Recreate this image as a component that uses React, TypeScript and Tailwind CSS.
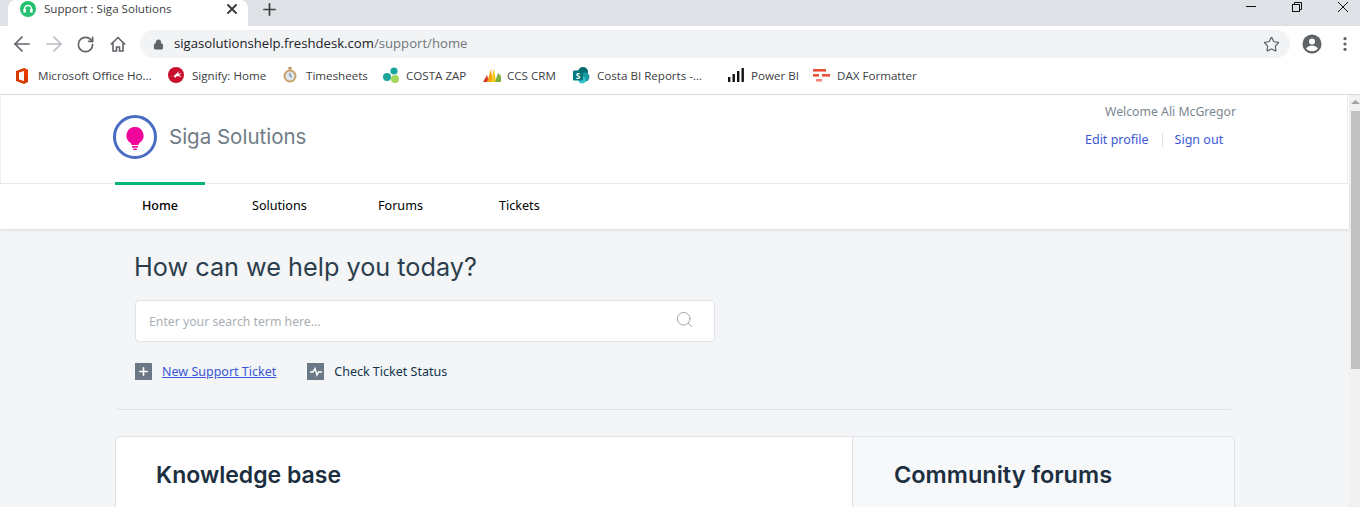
import { ArrowLeft, ArrowRight, RotateCw, Lock, Star, Plus, X, Search } from 'lucide-react'

const UI_FONT = "font-['Open_Sans','Noto_Sans',sans-serif]"
const HEADING_FONT = "font-['Inter',sans-serif]"

function OfficeIcon() {
  return (
    <svg width="14" height="18" viewBox="0 0 14 18">
      <path d="M1 4 9 1l4 2v12l-4 2-8-3z" fill="#d83b01" />
      <path d="M4 5.500 9 4v10l-5-1.500z" fill="#fff" />
      <path d="M9 1l4 2v6H9z" fill="#eb3c00" />
    </svg>
  )
}

function SignifyIcon() {
  return (
    <svg width="16" height="16" viewBox="0 0 16 16" className="-ml-px">
      <circle cx="8" cy="8" r="8" fill="#c8102e" />
      <path d="M1 10c3 0 5-1 7-3l3-3-1 3 4-1-3 2 3 2-5-1-2 2-1-2z" fill="#fff" />
    </svg>
  )
}

function TimerIcon() {
  return (
    <svg width="14" height="16" viewBox="0 0 14 16">
      <rect x="5.500" y="0" width="3" height="2.500" fill="#b98a4e" />
      <circle cx="7" cy="9" r="6.500" fill="#c9a26b" />
      <circle cx="7" cy="9" r="4.500" fill="#dfe7ee" />
      <path d="M7 6v3l2 1" stroke="#5b6b7a" strokeWidth="1" fill="none" />
    </svg>
  )
}

function CostaIcon() {
  return (
    <svg width="18" height="17" viewBox="0 0 18 17" className="-ml-px">
      <circle cx="12" cy="4" r="3.600" fill="#1aa59a" />
      <circle cx="5" cy="10" r="4" fill="#1aa59a" />
      <circle cx="13" cy="12" r="4" fill="#a3d65c" />
    </svg>
  )
}

function CrmIcon() {
  return (
    <svg width="18" height="16" viewBox="0 0 18 16" className="-ml-px">
      <path d="M0 15 4 8l2 7z" fill="#d9382c" />
      <path d="M4 15 8 2l2 13z" fill="#f2a516" />
      <path d="M8 15 11 1l2 14z" fill="#f7c81e" />
      <path d="M12 15l3-9 3 3v6z" fill="#7fb03f" />
    </svg>
  )
}

function SharepointIcon() {
  return (
    <svg width="17" height="17" viewBox="0 0 17 17" className="-ml-px">
      <circle cx="10" cy="5" r="5" fill="#036c70" />
      <circle cx="12" cy="10" r="4.500" fill="#1a9ba1" />
      <circle cx="9" cy="13" r="3.600" fill="#37c6d0" />
      <rect x="0" y="3.500" width="10" height="10" rx="1" fill="#03787c" />
      <text x="5" y="11.500" textAnchor="middle" fontSize="8" fontWeight="700" fill="#fff" fontFamily="Open Sans">S</text>
    </svg>
  )
}

function PowerBiIcon() {
  return (
    <svg width="16" height="14" viewBox="0 0 16 14">
      <rect x="0" y="9" width="2.400" height="5" fill="#111" />
      <rect x="4.500" y="6" width="2.400" height="8" fill="#111" />
      <rect x="9" y="3" width="2.400" height="11" fill="#111" />
      <rect x="13.500" y="0" width="2.400" height="14" fill="#111" />
    </svg>
  )
}

function DaxIcon() {
  return (
    <svg width="17" height="13" viewBox="0 0 17 13" className="-ml-px">
      <rect x="0" y="0" width="13" height="2.600" fill="#e8503a" />
      <rect x="0" y="5" width="6" height="2.600" fill="#e8503a" />
      <rect x="9" y="5" width="8" height="2.600" fill="#e8503a" />
      <rect x="3" y="10" width="6" height="2.600" fill="#f08a78" />
    </svg>
  )
}

const bookmarks = [
  { label: 'Microsoft Office Ho...', icon: <OfficeIcon />, width: 'w-[154px]' },
  { label: 'Signify: Home', icon: <SignifyIcon />, width: 'w-[114px]' },
  { label: 'Timesheets', icon: <TimerIcon />, width: 'w-[100px]' },
  { label: 'COSTA ZAP', icon: <CostaIcon />, width: 'w-[101px]' },
  { label: 'CCS CRM', icon: <CrmIcon />, width: 'w-[90px]' },
  { label: 'Costa BI Reports -...', icon: <SharepointIcon />, width: 'w-[154px]' },
  { label: 'Power BI', icon: <PowerBiIcon />, width: 'w-[86px]' },
  { label: 'DAX Formatter', icon: <DaxIcon />, width: 'w-[120px]' },
]

function BrowserChrome() {
  return (
    <div className={UI_FONT}>
      {/* Tab strip */}
      <div className="flex h-[26px] bg-[#dee1e6]">
        <div className="ml-2 flex h-[26px] w-[240px] items-start rounded-t-lg bg-white pl-3 pr-2 pt-[1px]">
          <span className="flex h-4 w-4 items-center justify-center rounded-full bg-[#25c16f]">
            <svg width="10" height="10" viewBox="0 0 10 10" fill="none" stroke="#fff" strokeWidth="1.300">
              <path d="M1.500 6.500V5a3.500 3.500 0 0 1 7 0v1.500" />
              <rect x="1" y="5.500" width="1.400" height="2.400" fill="#fff" />
              <rect x="7.600" y="5.500" width="1.400" height="2.400" fill="#fff" />
            </svg>
          </span>
          <span className="ml-2 flex-1 text-[11.6px] leading-4 text-[#3c4043]">Support : Siga Solutions</span>
          <X size={16} strokeWidth={3} className="text-[#3c4043]" />
        </div>
        <Plus size={19} strokeWidth={2.2} className="ml-[12px] mt-0 text-[#3c4043]" />
        <div className="ml-auto flex h-[26px] items-start pt-[2px]">
          <div className="mt-[4px] h-px w-[10px] bg-[#111]" />
          <svg width="10" height="10" viewBox="0 0 10 10" fill="none" stroke="#111" className="ml-[36px]">
            <rect x="0.500" y="2.500" width="7" height="7" />
            <path d="M2.500 2.500V.5h7v7H7.500" />
          </svg>
          <svg width="10" height="10" viewBox="0 0 10 10" fill="none" stroke="#111" className="ml-[36px] mr-[12px]">
            <path d="M0 0l10 10M10 0 0 10" />
          </svg>
        </div>
      </div>

      {/* Toolbar */}
      <div className="flex h-[36px] items-center bg-white pl-[10px]">
        <ArrowLeft size={24} strokeWidth={1.7} className="text-[#5f6368]" />
        <ArrowRight size={24} strokeWidth={1.7} className="ml-[8px] text-[#b9bcc0]" />
        <RotateCw size={19} strokeWidth={2.1} className="ml-[10px] text-[#5f6368]" />
        <svg width="16" height="16" viewBox="0 0 16 16" fill="none" stroke="#5f6368" strokeWidth="1.600" className="ml-[15px]">
          <path d="M.8 8.500 8 1.500l7.200 7M3 7v8h3.500v-4h3v4H13V7" />
        </svg>
        <div className="ml-[14px] flex h-[28px] w-[1150px] items-center rounded-full bg-[#f1f3f4] pl-[13px] pr-[10px]">
          <Lock size={11} fill="#5f6368" className="text-[#5f6368]" />
          <span className="ml-[10px] text-[13.15px] text-[#202124]">
            sigasolutionshelp.freshdesk.com<span className="text-[#70757a]">/support/home</span>
          </span>
          <Star size={17} strokeWidth={1.7} className="ml-auto text-[#5f6368]" />
        </div>
        <svg width="20" height="20" viewBox="0 0 20 20" className="ml-[12px]">
          <circle cx="10" cy="10" r="9.500" fill="#5f6368" />
          <circle cx="10" cy="7.500" r="3" fill="#fff" />
          <path d="M4 14.500c1.500-2 3.500-3 6-3s4.500 1 6 3c-1.500 1.800-3.500 2.700-6 2.700s-4.500-.9-6-2.700z" fill="#fff" />
        </svg>
        <svg width="4" height="14" viewBox="0 0 4 14" fill="#5f6368" className="ml-[21px]">
          <circle cx="2" cy="1.700" r="1.600" />
          <circle cx="2" cy="7" r="1.600" />
          <circle cx="2" cy="12.300" r="1.600" />
        </svg>
      </div>

      {/* Bookmarks */}
      <div className="flex h-[33px] items-center border-b border-[#d9dbe0] bg-white pb-[5px] pl-[15px]">
        {bookmarks.map((b) => (
          <div key={b.label} className={`flex items-center ${b.width}`}>
            <span className="flex w-[23px] shrink-0 items-center">{b.icon}</span>
            <span className="whitespace-nowrap text-[11.6px] text-[#3c4043]">{b.label}</span>
          </div>
        ))}
      </div>
    </div>
  )
}

function Portal() {
  return (
    <div className="min-w-0 flex-1 font-['Noto_Sans','Open_Sans',sans-serif]">
      {/* Logo row */}
      <div className="mr-px flex h-[89px] border border-t-0 border-[#ebeff3] bg-white pl-[111px]">
        <div className="flex items-center self-start pt-[19px]">
          <svg width="46" height="46" viewBox="0 0 46 46">
            <circle cx="23" cy="23" r="20.500" fill="#fff" stroke="#4a6cc3" strokeWidth="3" />
            <path d="M23 13a8.500 8.500 0 0 0-5 15.400c1 .8 1.500 1.500 1.600 2.600h6.800c.1-1.100.6-1.800 1.600-2.600A8.500 8.500 0 0 0 23 13z" fill="#f0059b" />
            <rect x="20" y="32" width="6" height="1.600" fill="#f0059b" />
            <rect x="21" y="34.500" width="4" height="1.600" rx=".8" fill="#f0059b" />
          </svg>
          <span className={`ml-[11px] text-[20.5px] text-[#6f7c87] ${HEADING_FONT}`}>Siga Solutions</span>
        </div>
        <div className="ml-auto w-[262px] text-[12.5px]">
          <div className="mt-[7px] pl-[20px] text-[12.25px] leading-5 whitespace-nowrap text-[#7b8790]">Welcome Ali McGregor</div>
          <div className="mt-[8px] flex items-center leading-5 text-[#3b57d6]">
            <span>Edit profile</span>
            <span className="ml-[13px] mr-[12px] h-[14px] w-px bg-[#dfe3e8]" />
            <span>Sign out</span>
          </div>
        </div>
      </div>

      {/* Nav */}
      <div className="relative flex h-[45px] items-center bg-white pl-[142px] text-[12.6px] shadow-[0_1px_3px_rgba(0,0,0,0.12)]">
        <span className="absolute -top-[2px] left-[115px] h-[3px] w-[90px] bg-[#00b57a]" />
        <span className="w-[110px] text-[12.5px] font-medium text-black">Home</span>
        <span className="w-[126px] text-black">Solutions</span>
        <span className="w-[121px] text-black">Forums</span>
        <span className="text-black">Tickets</span>
      </div>

      {/* Body */}
      <div className="h-[278px] overflow-hidden bg-[#f3f5f7] pl-[115px] pr-[114px]">
        <div className="rounded-b-md border-b border-[#dfe3e8] pb-[29px]">
          <h1 className={`ml-[19px] pt-[20px] text-[25.25px] leading-9 text-[#2c3e4c] ${HEADING_FONT}`}>How can we help you today?</h1>
          <div className="mt-[15px] ml-[20px] flex h-[42px] w-[580px] items-center rounded border border-[#dfe3e8] bg-white pl-[13px] pr-[20px]">
            <span className="pt-[2px] text-[12.25px] text-[#a9afb5]">Enter your search term here...</span>
            <Search size={19} strokeWidth={1} className="mb-[3px] ml-auto text-[#8c959d]" />
          </div>
          <div className="mt-[21px] ml-[20px] flex h-[17px] items-center text-[12.5px]">
            <span className="flex h-[17px] w-[17px] items-center justify-center bg-[#6b7885]">
              <Plus size={13} strokeWidth={3} className="text-white" />
            </span>
            <span className="ml-[10px] pt-[2px] text-[#3b57d6] underline">New Support Ticket</span>
            <span className="ml-[31px] flex h-[17px] w-[17px] items-center justify-center bg-[#6b7885]">
              <svg width="12" height="10" viewBox="0 0 12 10" fill="none" stroke="#fff" strokeWidth="1.400">
                <path d="M0 5h3l2-3.500L7 8l1.500-3H12" />
              </svg>
            </span>
            <span className="ml-[10px] pt-[2px] text-[#12344d]">Check Ticket Status</span>
          </div>
        </div>
        <div className="mt-[26px] flex h-[90px] rounded-t-md border border-[#dfe3e8] bg-white">
          <div className="w-[736px] pl-[40px] pt-[22px]">
            <h2 className={`text-[23px] leading-8 font-semibold text-[#1c2f40] ${HEADING_FONT}`}>Knowledge base</h2>
          </div>
          <div className="flex-1 rounded-tr-md border-l border-[#dfe3e8] bg-[#f7f8fa] pl-[41px] pt-[22px]">
            <h2 className={`text-[23.5px] leading-8 font-semibold text-[#1c2f40] ${HEADING_FONT}`}>Community forums</h2>
          </div>
        </div>
      </div>
    </div>
  )
}

function Scrollbar() {
  return (
    <div className="flex w-[11px] shrink-0 flex-col items-end bg-[#f1f1f1]">
      <svg width="9" height="16" viewBox="0 0 9 16" className="shrink-0">
        <path d="M0 9 4.500 5 9 9z" fill="#a3a3a3" />
      </svg>
      <div className="h-[258px] w-[9px] bg-[#c1c1c1]" />
    </div>
  )
}

export default function App() {
  return (
    <div className="flex h-[507px] w-[1360px] flex-col overflow-hidden bg-white">
      <BrowserChrome />
      <div className="flex flex-1 overflow-hidden">
        <Portal />
        <Scrollbar />
      </div>
    </div>
  )
}
